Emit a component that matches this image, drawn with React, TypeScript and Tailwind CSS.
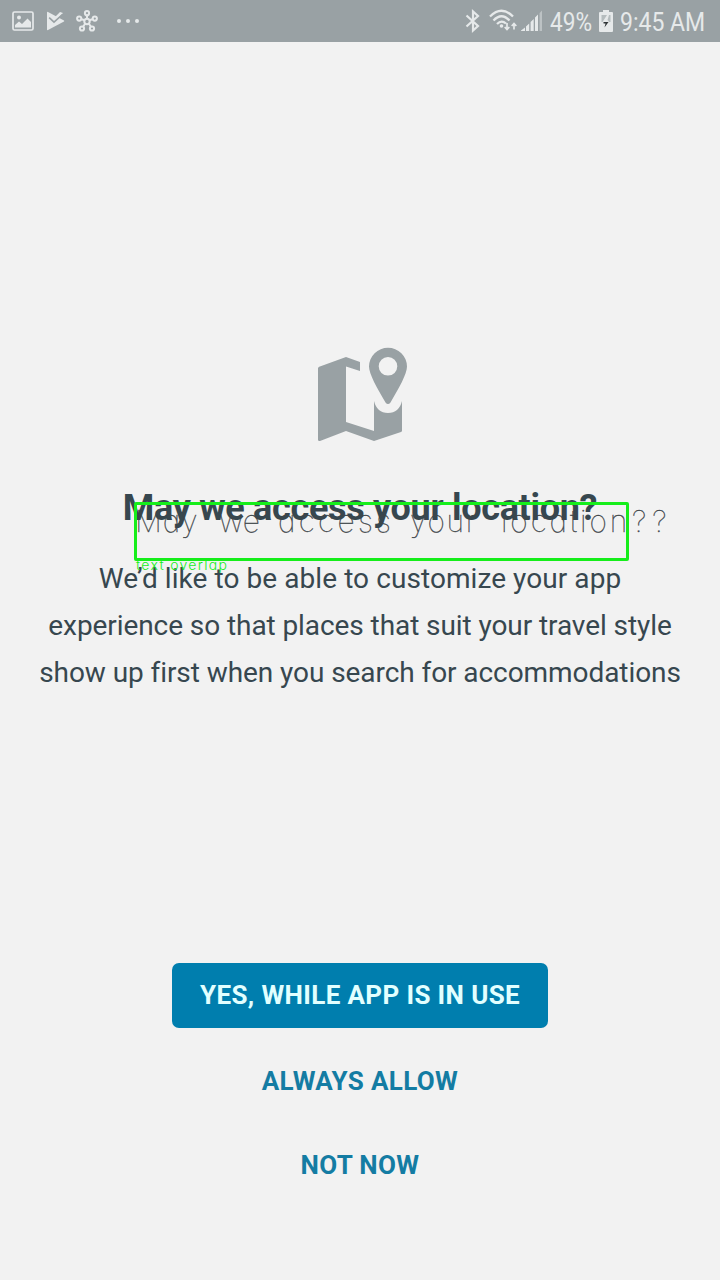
import React from "react";

function PictureIcon() {
  return (
    <svg className="h-[20px] w-[22px]" viewBox="0 0 22 20">
      <rect x="1" y="1" width="20" height="18" rx="1.5" fill="none" stroke="#e6e9ea" strokeWidth="1.7" />
      <circle cx="7" cy="6.5" r="2" fill="#e6e9ea" />
      <path d="M3 16.500V14L7 10.500L10 13L15.500 7.500L19 11V16.500Z" fill="#e6e9ea" />
    </svg>
  );
}

function PlayCheckIcon() {
  return (
    <svg className="h-[20px] w-[19px]" viewBox="0 0 19 20">
      <path d="M1 1.500Q1 .5 2 1L18 9.500Q18.500 10 18 10.500L2 19Q1 19.500 1 18.500Z" fill="#e6e9ea" />
      <path d="M4.500 6.500L8.500 10.500L17 2L14 1L8.500 6.500L6.500 4.500Z" fill="#e6e9ea" />
      <path d="M3.200 6.700L8 11.200L16.500 3.500" fill="none" stroke="#99a1a4" strokeWidth="1.600" />
    </svg>
  );
}

function HubIcon() {
  return (
    <svg className="h-[22px] w-[22px]" viewBox="0 0 22 22" fill="none" stroke="#e6e9ea" strokeWidth="2">
      <path d="M11 11V5M11 11L4 8.700M11 11L18 8.700M11 11L6.500 17.500M11 11L15.500 17.500" />
      <circle cx="11" cy="11.500" r="2.700" fill="#99a1a4" />
      <circle cx="11" cy="3.200" r="2.100" fill="#99a1a4" />
      <circle cx="3.200" cy="8.600" r="2.100" fill="#99a1a4" />
      <circle cx="18.800" cy="8.600" r="2.100" fill="#99a1a4" />
      <circle cx="6" cy="18.500" r="2.100" fill="#99a1a4" />
      <circle cx="16" cy="18.500" r="2.100" fill="#99a1a4" />
    </svg>
  );
}

function BluetoothIcon() {
  return (
    <svg className="h-[24px] w-[16px]" viewBox="0 0 16 24" fill="none" stroke="#e6e9ea" strokeWidth="2.200">
      <path d="M1.500 6.500L13 17L8 21.500V2.500L13 7L1.500 17.500" />
    </svg>
  );
}

function WifiIcon() {
  return (
    <svg className="h-[24px] w-[28px]" viewBox="0 0 28 24" fill="none" stroke="#e6e9ea" strokeWidth="2.300">
      <path d="M1 7.500Q12.500 -4 24 7.500M4.500 11.500Q12.500 3 20.500 11.500M8 15Q12.500 10.500 17 14.500" />
      <circle cx="12.500" cy="17" r="1.800" fill="#e6e9ea" stroke="none" />
      <path d="M18 14V20M15.700 18L18 20.500L20.300 18M25 20.500V14.500M22.700 17L25 14.500L27.300 17" strokeWidth="1.700" />
    </svg>
  );
}

function SignalIcon() {
  return (
    <svg className="h-[22px] w-[22px]" viewBox="0 0 22 22" fill="#e6e9ea">
      <path d="M0 21V20.500L4 17.500V21ZM5 21V16.500L8.200 13.500V21ZM9.600 21V12L12.700 9V21ZM14 21V7.500L17 4.500V21Z" />
      <path d="M18.600 21V3L21 .5V21Z" fill="#bcc2c4" />
    </svg>
  );
}

function BatteryIcon() {
  return (
    <svg className="h-[22px] w-[14px]" viewBox="0 0 14 22">
      <path d="M4 0H10V2H13Q14 2 14 3V21Q14 22 13 22H1Q0 22 0 21V3Q0 2 1 2H4Z" fill="#e6e9ea" />
      <path d="M2.500 5H11.500V12H2.500Z" fill="#b5bcbe" />
      <path d="M8 5L3.500 12H7V13H11L8.500 10L10 5Z" fill="#e6e9ea" />
      <path d="M4.500 12H9.500L5.500 17.500L6.500 13.500H4.500Z" fill="#303638" />
    </svg>
  );
}

function StatusBar() {
  return (
    <header className="flex h-[42px] shrink-0 items-center bg-[#99a1a4] pl-3 text-[#e6e9ea]">
      <PictureIcon />
      <span className="ml-[12px] flex"><PlayCheckIcon /></span>
      <span className="ml-[11px] flex"><HubIcon /></span>
      <span className="ml-[19px] flex gap-[5px]">
        <i className="size-1 rounded-full bg-[#e6e9ea]" />
        <i className="size-1 rounded-full bg-[#e6e9ea]" />
        <i className="size-1 rounded-full bg-[#e6e9ea]" />
      </span>
      <span className="ml-auto flex"><BluetoothIcon /></span>
      <span className="ml-[8px] flex"><WifiIcon /></span>
      <span className="ml-[4px] flex"><SignalIcon /></span>
      <span className="ml-[7px] w-[49px] whitespace-nowrap text-[26px] leading-[42px]">
        <span className="inline-block origin-left scale-x-[0.87] pt-[1px]">49%</span>
      </span>
      <BatteryIcon />
      <span className="ml-[7px] w-[100px] whitespace-nowrap text-[26px] leading-[42px]">
        <span className="inline-block origin-left scale-x-[0.885] pt-[1px]">9:45 AM</span>
      </span>
    </header>
  );
}

function MapIcon() {
  return (
    <svg className="h-[96px] w-[92px]" viewBox="0 0 92 96" fill="#99a1a4">
      <path d="M2 21.500Q2 20.200 3.200 19.700L30 10L44 15V24L30 19.500V75L58 84V54Q61 66 72 66Q83 66 86 54V83.500Q86 84.500 85 85L58 94L30 84L4 94Q2 94.500 2 92.500Z" />
      <path fillRule="evenodd" d="M72 .7A19 19 0 0 0 53 19.500C53 27 61 41 69.500 55.500Q72 58.500 74.500 55.500C83 41 91 27 91 19.500A19 19 0 0 0 72 .7ZM72 10A9.300 9.300 0 1 1 72 28.600A9.300 9.300 0 1 1 72 10Z" />
    </svg>
  );
}

function OverlapAnnotation() {
  return (
    <>
      <div className="absolute top-[503px] left-[135px] h-9 w-[540px] text-[30px] leading-9 font-thin whitespace-nowrap text-[#3f464a] [font-family:Inter,sans-serif] [font-feature-settings:'cv11'] [-webkit-text-stroke:0.3px_#3f464a]">
        <span className="absolute left-0 tracking-[1px]">May</span>
        <span className="absolute left-[84px]">we</span>
        <span className="absolute left-[143px] tracking-[3.300px]">access</span>
        <span className="absolute left-[275px] tracking-[1.700px]">your</span>
        <span className="absolute left-[366px] tracking-[2.900px]">location</span>
        <span className="absolute left-[497px] tracking-[6px]">??</span>
      </div>
      <div className="absolute top-[502px] left-[134px] h-[59px] w-[495px] rounded-[2px] border-3 border-[#16ee1b]" />
      <div className="absolute top-[556px] left-[136px] text-[14px] leading-[18px] font-light tracking-[1.300px] whitespace-nowrap text-[#16ee1b] [font-family:Inter,sans-serif] [font-feature-settings:'cv11']">text overlap</div>
    </>
  );
}

export default function App() {
  return (
    <div className="relative flex h-[1280px] w-[720px] flex-col overflow-hidden bg-[#f2f2f2] [font-family:Roboto,sans-serif]">
      <StatusBar />
      <main className="flex flex-1 flex-col items-center text-center text-[#37474f]">
        <div className="mt-[305px] flex pl-1"><MapIcon /></div>
        <h1 className="mt-[42px] text-[36px] leading-[46px] font-bold tracking-[-0.310px] whitespace-nowrap">May we access your location?</h1>
        <p className="mt-[24px] text-[28px] leading-[47px] whitespace-nowrap">
          <span className="tracking-[0.070px]">We’d like to be able to customize your app</span><br />
          <span className="tracking-[-0.080px]">experience so that places that suit your travel style</span><br />
          <span className="tracking-[-0.070px]">show up first when you search for accommodations</span>
        </p>
        <button className="mt-[267px] h-[65px] w-[376px] rounded-[7px] bg-[#007eae] text-[26px] font-bold tracking-[0.370px] whitespace-nowrap text-[#e2ffff]">YES, WHILE APP IS IN USE</button>
        <button className="mt-[21px] h-[64px] text-[26px] font-bold tracking-[0.370px] text-[#147ca3]">ALWAYS ALLOW</button>
        <button className="mt-[20px] h-[64px] text-[26px] font-bold tracking-[0.370px] text-[#147ca3]">NOT NOW</button>
      </main>
      <OverlapAnnotation />
    </div>
  );
}
